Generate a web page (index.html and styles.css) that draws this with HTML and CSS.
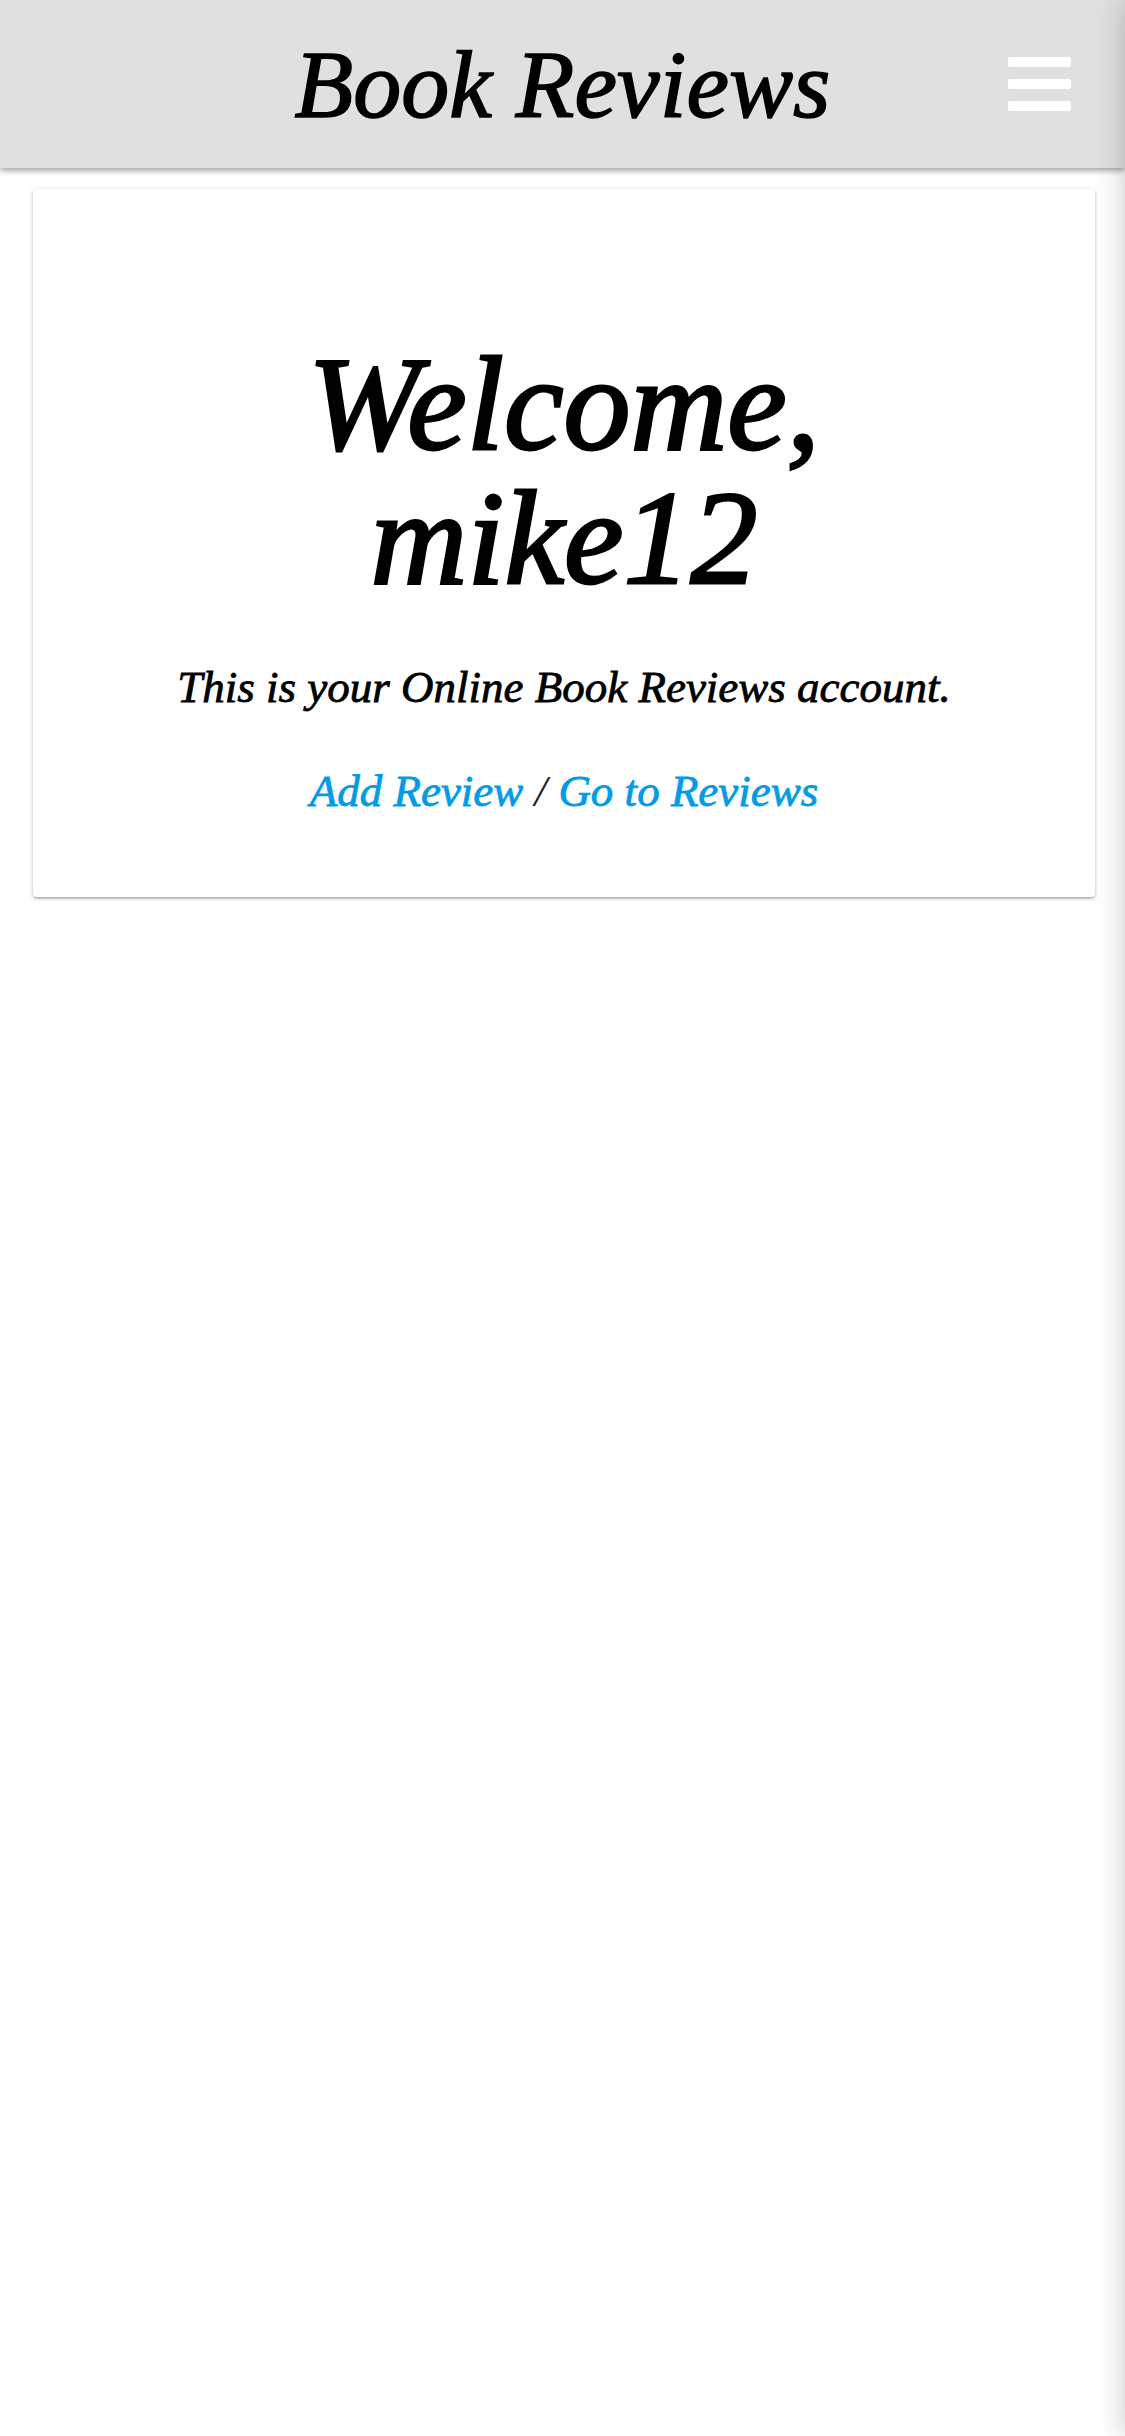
FILE: index.html
```html
<!DOCTYPE html>
<html lang="en">
<head>
<meta charset="utf-8">
<title>Book Reviews</title>
<link rel="stylesheet" href="styles.css">
</head>
<body>
<header class="navbar">
  <h1 class="brand">Book Reviews</h1>
  <button class="menu" aria-label="Menu">
    <span class="bar"></span><span class="bar"></span><span class="bar"></span>
  </button>
</header>
<main class="main">
  <section class="card">
    <h2 class="welcome">Welcome,<br>mike12</h2>
    <p class="intro">This is your Online Book Reviews account.</p>
    <p class="links"><a href="#" class="link">Add Review</a> <span class="sep">/</span> <a href="#" class="link">Go to Reviews</a></p>
  </section>
</main>
<aside class="sidenav"></aside>
</body>
</html>
```
FILE: styles.css
```css
html, body {
  margin: 0;
  padding: 0;
  background: #ffffff;
}
body {
  font-family: "Liberation Serif", "Times New Roman", serif;
  font-style: italic;
  color: #000;
  width: 1125px;
  min-height: 2436px;
  overflow: hidden;
}
.navbar {
  height: 168px;
  background: #e0e0e0;
  display: flex;
  align-items: center;
  justify-content: center;
  position: relative;
  box-shadow: 0 3px 5px rgba(0,0,0,0.28), 0 1px 10px rgba(0,0,0,0.1);
  z-index: 2;
}
.brand {
  margin: 0;
  font-size: 96px;
  font-weight: normal;
  font-style: italic;
  line-height: 1;
  padding-top: 2px;
  -webkit-text-stroke: 1.6px #000;
}
.menu {
  position: absolute;
  right: 54px;
  top: 57px;
  width: 63px;
  height: 54px;
  padding: 0;
  border: 0;
  background: transparent;
  display: flex;
  flex-direction: column;
  justify-content: space-between;
}
.bar {
  display: block;
  width: 63px;
  height: 10px;
  border-radius: 2px;
  background: #ffffff;
}
.main {
  padding: 21px 30px 0 33px;
}
.card {
  background: #fff;
  border-radius: 4px;
  box-shadow: 0 2px 2px rgba(0,0,0,0.14), 0 3px 1px -2px rgba(0,0,0,0.12), 0 1px 5px rgba(0,0,0,0.2);
  height: 708px;
  box-sizing: border-box;
  text-align: center;
  padding-top: 148px;
}
.welcome {
  margin: 0;
  font-size: 134px;
  font-weight: normal;
  line-height: 134px;
  -webkit-text-stroke: 2.8px #000;
}
.intro {
  margin: 55px 0 0;
  font-size: 45px;
  line-height: 1.2;
  -webkit-text-stroke: 0.8px #000;
}
.links {
  margin: 50px 0 0;
  font-size: 45px;
  line-height: 1.2;
}
.link {
  color: #039be5;
  text-decoration: none;
  -webkit-text-stroke: 0.8px #039be5;
}
.sep {
  color: #222;
}
.sidenav {
  position: fixed;
  top: 0;
  right: -300px;
  width: 300px;
  height: 100%;
  background: #fff;
  box-shadow: 0 0 28px rgba(0,0,0,0.22);
  z-index: 3;
}
```
